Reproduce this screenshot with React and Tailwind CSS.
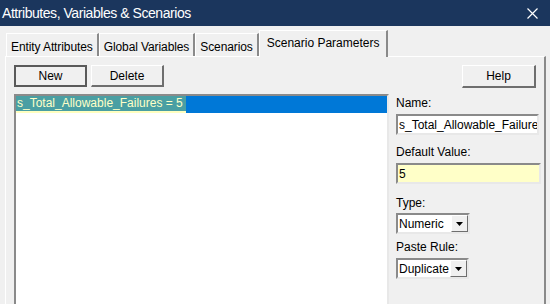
import React from 'react';

const font = { fontFamily: '"Liberation Sans", Arial, sans-serif' };

const Tab = ({ label, active }) => (
    <div
        className={
            active
                ? 'h-[27px] px-[7px] pt-[3px] bg-[#f0f0f0] border-t border-l border-white border-r-2 border-r-[#8a8a8a] -mb-px relative z-10 text-[12px] text-black'
                : 'h-[23px] px-[4px] pt-[4px] bg-[#f0f0f0] border-t border-l border-white border-r-2 border-r-[#8a8a8a] text-[12px] tracking-[-0.1px] text-black'
        }
    >
        {label}
    </div>
);

const Button = ({ label, isDefault, className }) => (
    <div
        className={`h-[22px] flex items-center justify-center text-[12px] text-black bg-[#f0f0f0] ${
            isDefault
                ? 'border-2 border-[#5a5a5a]'
                : 'border border-t-white border-l-white border-r-2 border-b-2 border-r-[#6e6e6e] border-b-[#6e6e6e]'
        } ${className}`}
    >
        {label}
    </div>
);

const Sunken = ({ children, className }) => (
    <div className={`border-2 border-t-[#8a8a8a] border-l-[#8a8a8a] border-r-[#e8e8e8] border-b-[#e8e8e8] ${className}`}>
        {children}
    </div>
);

const Select = ({ value, width }) => (
    <Sunken className={`h-[21px] bg-white flex items-center ${width}`}>
        <span className="flex-1 pl-[1px] text-[12px] text-black leading-none">{value}</span>
        <div className="w-[17px] h-[17px] flex items-center justify-center bg-[#f0f0f0] border border-t-white border-l-white border-r-[#6e6e6e] border-b-[#6e6e6e]">
            <svg width="7" height="4" viewBox="0 0 7 4">
                <polygon points="0,0 7,0 3.5,4" fill="#000" />
            </svg>
        </div>
    </Sunken>
);

export default function App() {
    return (
        <div className="w-[550px] h-[304px] bg-[#f0f0f0] overflow-hidden flex flex-col" style={font}>
            {/* title bar */}
            <div className="h-[26px] bg-[#1b365d] flex items-center justify-between pl-[2px] pr-[12px] shrink-0">
                <span className="text-white text-[14px] tracking-[-0.45px]">
                    Attributes, Variables &amp; Scenarios
                </span>
                <svg width="11" height="11" viewBox="0 0 11 11">
                    <path d="M0.5 0.5 L10.5 10.5 M10.5 0.5 L0.5 10.5" stroke="#fff" strokeWidth="1.2" />
                </svg>
            </div>

            {/* tabs */}
            <div className="flex items-end pl-[6px] pt-[4px] shrink-0">
                <Tab label="Entity Attributes" />
                <Tab label="Global Variables" />
                <Tab label="Scenarios" />
                <Tab label="Scenario Parameters" active />
            </div>

            {/* tab page */}
            <div className="ml-[5px] w-[541px] flex-1 border-t border-l border-white border-r-2 border-r-[#8a8a8a] flex">
                <div className="ml-[8px] w-[375px] flex flex-col pt-[8px]">
                    <div className="flex gap-[4px]">
                        <Button label="New" isDefault className="w-[73px]" />
                        <Button label="Delete" className="w-[73px]" />
                    </div>
                    <Sunken className="mt-[7px] flex-1 bg-white border-b-0">
                        <div className="h-[17px] flex bg-[#0078d7]">
                            <div className="bg-[#4a9fa3] text-[#ffffc8] text-[12px] leading-[15px] pl-[1px] pr-[3px] border-b-2 border-[#ffffc0]">
                                s_Total_Allowable_Failures = 5
                            </div>
                        </div>
                    </Sunken>
                </div>

                <div className="ml-[7px] w-[145px] flex flex-col pt-[8px]">
                    <div className="flex justify-end pr-[5px]">
                        <Button label="Help" className="w-[74px] h-[23px]" />
                    </div>
                    <div className="mt-[8px] text-[12px] text-black leading-[15px]">Name:</div>
                    <Sunken className="mt-[3px] h-[21px] w-[143px] bg-white flex items-center overflow-hidden">
                        <span className="text-[12px] text-black whitespace-nowrap pl-[1px]">s_Total_Allowable_Failures</span>
                    </Sunken>
                    <div className="mt-[10px] text-[12px] text-black leading-[15px]">Default Value:</div>
                    <Sunken className="mt-[3px] h-[21px] w-[145px] bg-[#ffffc8] flex items-center">
                        <span className="text-[12px] text-black pl-[1px]">5</span>
                    </Sunken>
                    <div className="mt-[12px] text-[12px] text-black leading-[15px]">Type:</div>
                    <div className="mt-[2px]">
                        <Select value="Numeric" width="w-[74px]" />
                    </div>
                    <div className="mt-[6px] text-[12px] text-black leading-[15px]">Paste Rule:</div>
                    <div className="mt-[3px]">
                        <Select value="Duplicate" width="w-[73px]" />
                    </div>
                </div>
            </div>
        </div>
    );
}
